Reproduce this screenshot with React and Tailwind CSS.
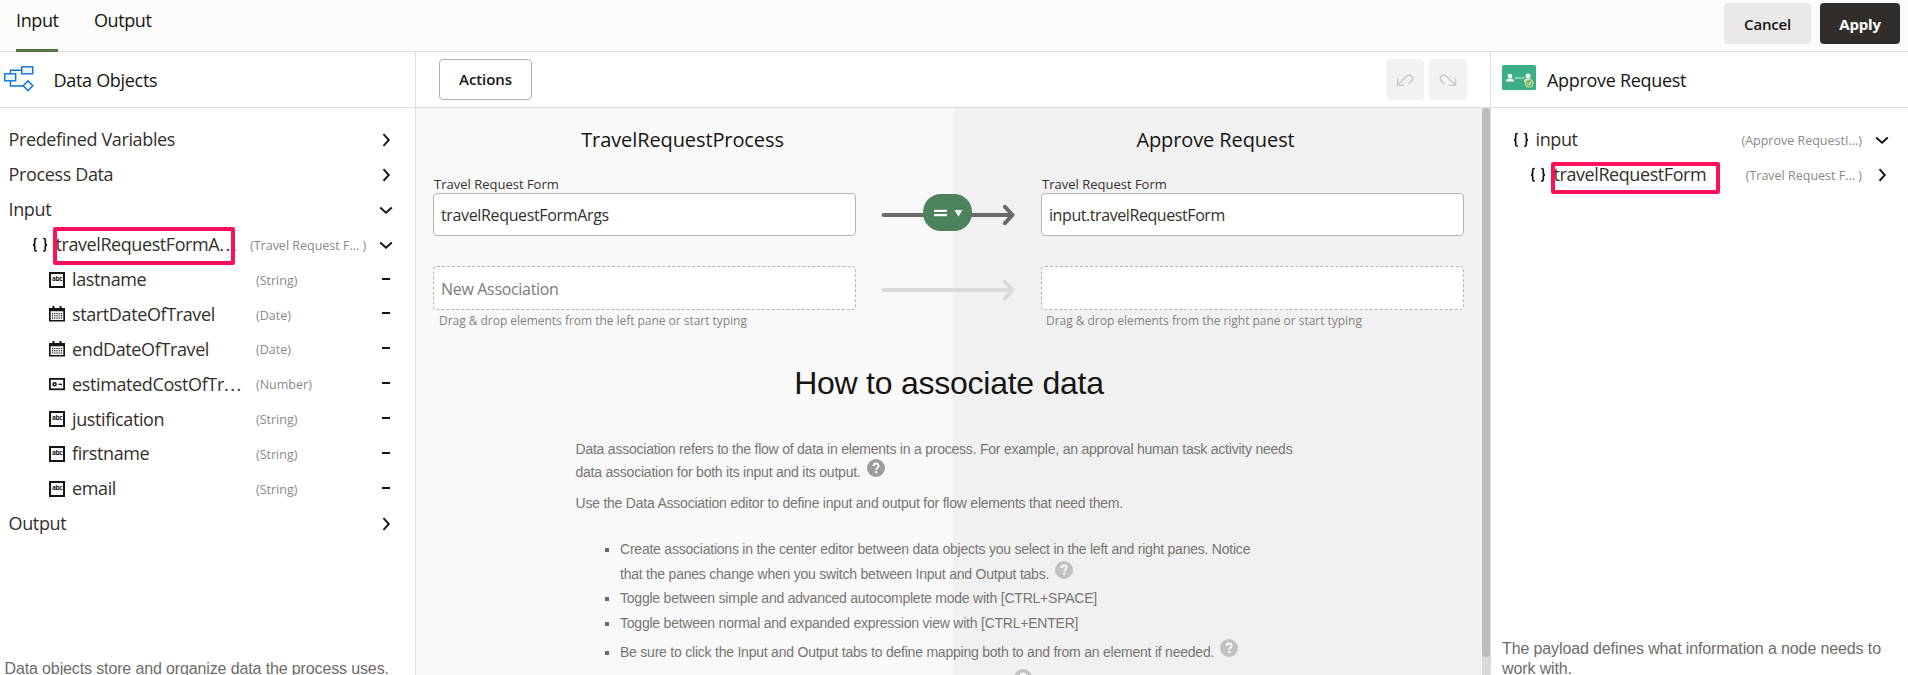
import React from "react";

const chevronPaths = {
  right: "M5.5 2.2 10.8 8l-5.3 5.8",
  down: "M2.2 5.5 8 10.8l5.8-5.3",
};

function Chevron({ dir }) {
  return (
    <svg viewBox="0 0 16 16" className="h-4 w-4 shrink-0" fill="none" stroke="#161513" strokeWidth="1.9">
      <path d={chevronPaths[dir]} />
    </svg>
  );
}

function Marker({ kind }) {
  if (kind === "leaf") {
    return (
      <span className="flex h-4 w-4 shrink-0 items-center justify-center">
        <span className="mb-0.5 h-[2px] w-2 bg-[#161513]" />
      </span>
    );
  }
  return <Chevron dir={kind} />;
}

function Braces() {
  return (
    <svg viewBox="0 0 16 16" className="h-4 w-4 shrink-0" fill="none" stroke="#161513" strokeWidth="1.7">
      <path d="M4.8 1.5H4.2Q2.7 1.5 2.7 3v3Q2.7 7.8 1 7.8q1.7 0 1.7 1.8v3q0 1.6 1.5 1.6h.6" />
      <path d="M11.2 1.5h.6q1.5 0 1.5 1.5v3q0 1.8 1.7 1.8-1.7 0-1.7 1.8v3q0 1.6-1.5 1.6h-.6" />
    </svg>
  );
}

function StringIcon() {
  return (
    <span className="flex h-4 w-4 shrink-0 items-center justify-center border-2 border-[#161513] font-['Open_Sans',sans-serif] text-[6.5px] leading-none font-bold tracking-[-0.4px] text-[#161513]">
      <span className="-mt-px">abc</span>
    </span>
  );
}

function DateIcon() {
  const rows = [7, 9.2, 11.4];
  const cols = [3, 5.2, 7.4, 9.6, 11.8];
  return (
    <svg viewBox="0 0 16 16" className="h-4 w-4 shrink-0" fill="#161513">
      <path d="M3.5 0h2v2h5V0h2v2H16v13.5H0V2h3.5zM1.7 5.3v8.6h12.6V5.3z" fillRule="evenodd" />
      {rows.map((y) => cols.map((x) => <rect key={`${x}-${y}`} x={x} y={y} width="1.2" height="1.2" />))}
    </svg>
  );
}

function NumberIcon() {
  return (
    <svg viewBox="0 0 16 16" className="h-4 w-4 shrink-0" fill="none" stroke="#161513">
      <rect x="0.9" y="2.9" width="14.2" height="10.4" strokeWidth="1.8" />
      <circle cx="5.6" cy="8.3" r="1.5" strokeWidth="1.5" />
      <path d="M9.5 8.3H13" strokeWidth="1.3" />
    </svg>
  );
}

const fieldIcons = { String: StringIcon, Date: DateIcon, Number: NumberIcon };

const fields = [
  ["lastname", "String"],
  ["startDateOfTravel", "Date"],
  ["endDateOfTravel", "Date"],
  ["estimatedCostOfTr...", "Number"],
  ["justification", "String"],
  ["firstname", "String"],
  ["email", "String"],
];

function Label({ text }) {
  if (!text.endsWith("...")) return text;
  return (
    <>
      {text.slice(0, -3)}
      <span className="tracking-[1.6px]">...</span>
    </>
  );
}

function GroupRow({ label, dir }) {
  return (
    <div className="flex h-[34.9px] items-center justify-between pr-[21px] pl-[8.5px]">
      <span className="text-[18px] tracking-[-0.36px]">{label}</span>
      <Chevron dir={dir} />
    </div>
  );
}

function FieldRow({ label, type }) {
  const Icon = fieldIcons[type];
  return (
    <div className="flex h-[34.9px] items-center pr-[21px] pl-[49px]">
      <Icon />
      <span className="ml-[7px] w-[184px] text-[18px] tracking-[-0.38px] whitespace-nowrap">
        <Label text={label} />
      </span>
      <span className="mt-[3px] flex-1 text-[12.5px] text-[#8b8987]">({type})</span>
      <Marker kind="leaf" />
    </div>
  );
}

function Help({ strong }) {
  return (
    <svg viewBox="0 0 18 18" className={`mb-2 ml-[6px] h-[18px] w-[18px] shrink-0 ${strong ? "text-[#9b9d9f]" : "text-[#bfc1c3]"}`}>
      <circle cx="9" cy="9" r="9" fill="currentColor" />
      <path d="M6.6 6.9c0-3.2 5-3.1 5-.2 0 1.9-2.4 1.9-2.4 4" fill="none" stroke="#fff" strokeWidth="1.8" />
      <rect x="8.2" y="12.1" width="2" height="2" fill="#fff" />
    </svg>
  );
}

function Arrow({ color }) {
  return (
    <svg viewBox="0 0 134 22" className="h-[22px] w-[134px]" fill="none" stroke={color} strokeWidth="4" strokeLinecap="round" strokeLinejoin="round">
      <path d="M2.5 11H130M124 2.8l7.5 8.2-7.5 8.2" />
    </svg>
  );
}

function Bullet({ children, className }) {
  return (
    <li className={`flex items-center ${className}`}>
      <span className="mt-px mr-[11px] h-1 w-1 shrink-0 bg-[#6b6a68]" />
      {children}
    </li>
  );
}

export default function App() {
  return (
    <div className="flex h-[675px] w-[1908px] flex-col overflow-hidden bg-white font-['Open_Sans',sans-serif] whitespace-nowrap text-[#34302c]">
      <header className="flex h-[52px] shrink-0 justify-between border-b border-[#dedddc] bg-[#fcfbf9] pl-4">
        <nav className="flex gap-9 text-[18px] tracking-[-0.4px] text-[#161513]">
          <div className="-mb-px flex w-[42px] flex-col justify-between">
            <span className="h-10 leading-10">Input</span>
            <span className="h-[3px] w-full bg-[#567445]" />
          </div>
          <span className="h-10 leading-10">Output</span>
        </nav>
        <div className="flex gap-[9px] pt-[3px] pr-2">
          <button className="flex h-[41px] w-[87px] items-center justify-center rounded bg-[#ebe9e7] pt-0.5 text-[15px] font-semibold tracking-[-0.2px] text-[#161513]">Cancel</button>
          <button className="flex h-[41px] w-20 items-center justify-center rounded bg-[#312d2a] pt-0.5 text-[15px] font-bold tracking-[-0.2px] text-white">Apply</button>
        </div>
      </header>

      <main className="flex min-h-0 flex-1">
        <aside className="flex w-[416px] shrink-0 flex-col border-r border-[#dedddc]">
          <div className="flex h-14 shrink-0 items-center border-b border-[#dedddc] pl-1">
            <svg viewBox="0 0 30 26" className="mb-0.5 h-[26px] w-[30px]" fill="none" stroke="#0a73d1" strokeWidth="1.4">
              <path d="M6.5 7V4.2H17M6.5 15v5H19" />
              <rect x="17.7" y="0.8" width="11" height="7" fill="#eaf4fc" />
              <rect x="0.7" y="7.8" width="11" height="7" fill="#eaf4fc" />
              <path d="M24 14.8l4.8 5-4.8 5-4.8-5z" fill="#eaf4fc" />
            </svg>
            <span className="ml-[19.5px] pt-0.5 text-[18px] tracking-[-0.3px] text-[#161513]">Data Objects</span>
          </div>
          <div className="pt-[14.5px]">
            <GroupRow label="Predefined Variables" dir="right" />
            <GroupRow label="Process Data" dir="right" />
            <GroupRow label="Input" dir="down" />
            <div className="relative flex h-[34.9px] items-center pr-[21px] pl-8">
              <Braces />
              <span className="ml-[7.5px] w-[194.5px] text-[18px] tracking-[-0.42px]">
                <Label text="travelRequestFormA..." />
              </span>
              <span className="mt-[3px] flex-1 text-[12.5px] text-[#8b8987]">(Travel Request F... )</span>
              <Chevron dir="down" />
              <span className="absolute top-0 left-[53px] h-[38px] w-[182px] rounded-xs border-4 border-[#ff0f5a]" />
            </div>
            {fields.map(([label, type]) => (
              <FieldRow key={label} label={label} type={type} />
            ))}
            <GroupRow label="Output" dir="right" />
          </div>
          <p className="mt-auto -mb-[5px] h-[23px] pl-[4.5px] font-['Liberation_Sans',sans-serif] text-[16px] leading-[23px] tracking-[-0.13px] text-[#6e6c6a]">
            Data objects store and organize data the process uses.
          </p>
        </aside>

        <section className="flex w-[1075px] shrink-0 flex-col border-r border-[#dedddc]">
          <div className="flex h-14 shrink-0 items-start justify-between border-b border-[#dedddc] pt-[7px] pr-[23px] pl-[23px]">
            <button className="flex h-[41px] w-[93px] items-center justify-center rounded border border-[#b3b1af] text-[15px] font-semibold tracking-[-0.1px] text-[#161513]">Actions</button>
            <div className="flex gap-[5px]">
              <button className="flex h-[41px] w-[38px] items-center justify-center rounded bg-[#f2f2f2]">
                <svg viewBox="0 0 18 14" className="h-3.5 w-[18px]" fill="none" stroke="#cbcac9" strokeWidth="1.5">
                  <path d="M1.5 5.5v6.8h6.8M1.8 12 10 3.4c3.8-3.9 9 1.4 5.2 5.2l-2.4 2.3" />
                </svg>
              </button>
              <button className="flex h-[41px] w-[38px] items-center justify-center rounded bg-[#f2f2f2]">
                <svg viewBox="0 0 18 14" className="h-3.5 w-[18px]" fill="none" stroke="#cbcac9" strokeWidth="1.5">
                  <path d="M16.5 5.5v6.8H9.7M16.2 12 8 3.4C4.2-.5-1 4.8 2.8 8.6l2.4 2.3" />
                </svg>
              </button>
            </div>
          </div>

          <div className="flex min-h-0 flex-1 bg-[linear-gradient(90deg,#f9f9f9_537px,#f1f1f1_537px)]">
            <div className="w-[1066px] shrink-0">
              <div className="grid h-16 grid-cols-2 items-center text-center text-[20px] tracking-[-0.1px] text-[#161513]">
                <h2>TravelRequestProcess</h2>
                <h2>Approve Request</h2>
              </div>

              <div className="grid grid-cols-[423px_185px_423px] pt-0.5 pl-[17px]">
                <span className="h-[19px] pl-px text-[13px] leading-[21px]">Travel Request Form</span>
                <span />
                <span className="h-[19px] pl-px text-[13px] leading-[21px]">Travel Request Form</span>

                <div className="flex h-[43px] items-center rounded border border-[#b5b4b3] bg-white pl-[7px] text-[16px] tracking-[-0.35px]">travelRequestFormArgs</div>
                <div className="relative flex items-center pl-[25px]">
                  <Arrow color="#6c6b6a" />
                  <span className="absolute top-px left-[67px] flex h-[37px] w-[49px] items-center justify-center gap-2 rounded-[18px] bg-[#4c825c]">
                    <svg viewBox="0 0 30 8" className="ml-px h-2 w-[30px]" fill="#fff">
                      <rect x="1" y="0.8" width="13" height="2.2" />
                      <rect x="1" y="5" width="13" height="2.2" />
                      <path d="M21.5 1h8l-4 6.6z" />
                    </svg>
                  </span>
                </div>
                <div className="flex h-[43px] items-center rounded border border-[#b5b4b3] bg-white pl-[7px] text-[16px] tracking-[-0.42px]">input.travelRequestForm</div>
              </div>

              <div className="mt-[30px] grid grid-cols-[423px_185px_423px] pl-[17px]">
                <div className="flex h-11 items-center rounded border border-dashed border-[#b5b4b3] bg-white pt-0.5 pl-[7px] text-[16px] tracking-[-0.32px] text-[#7d7b79]">New Association</div>
                <div className="flex items-center pt-[3px] pl-[25px]">
                  <Arrow color="#dadada" />
                </div>
                <div className="h-11 rounded border border-dashed border-[#b5b4b3] bg-white" />
                <span className="h-5 pl-1.5 text-[12px] leading-[21px] tracking-[-0.03px] text-[#858381]">Drag &amp; drop elements from the left pane or start typing</span>
                <span />
                <span className="h-5 pl-[5px] text-[12px] leading-[21px] tracking-[-0.03px] text-[#858381]">Drag &amp; drop elements from the right pane or start typing</span>
              </div>

              <div className="font-['Liberation_Sans',sans-serif] text-[14px] tracking-[-0.225px] text-[#777573]">
                <h1 className="mt-[33px] h-[39px] text-center text-[32px] leading-10 tracking-[-0.25px] text-[#161513]">How to associate data</h1>
                <div className="mt-[35.5px] pl-[159.5px]">
                  <p className="h-[23px] leading-[23px]">Data association refers to the flow of data in elements in a process. For example, an approval human task activity needs</p>
                  <p className="flex h-[23px] items-center">
                    data association for both its input and its output. <Help strong />
                  </p>
                  <p className="mt-2 h-[23px] leading-[23px]">Use the Data Association editor to define input and output for flow elements that need them.</p>
                  <ul className="mt-[22px] pl-[29.5px]">
                    <Bullet className="h-[25px]">Create associations in the center editor between data objects you select in the left and right panes. Notice</Bullet>
                    <li className="flex h-[25px] items-center pl-[15px]">
                      that the panes change when you switch between Input and Output tabs. <Help />
                    </li>
                    <Bullet className="h-6">Toggle between simple and advanced autocomplete mode with [CTRL+SPACE]</Bullet>
                    <Bullet className="h-[25px]">Toggle between normal and expanded expression view with [CTRL+ENTER]</Bullet>
                    <Bullet className="h-[33px]">
                      Be sure to click the Input and Output tabs to define mapping both to and from an element if needed. <Help />
                    </Bullet>
                    <li className="flex h-[18px] pl-[403px]">
                      <Help />
                    </li>
                  </ul>
                </div>
              </div>
            </div>
            <div className="w-2 shrink-0 bg-[#d9d9d7]">
              <div className="h-[549px] rounded-full bg-[#bbbbb9]" />
            </div>
          </div>
        </section>

        <aside className="flex flex-1 flex-col">
          <div className="flex h-14 shrink-0 items-center border-b border-[#dedddc] pl-[11px]">
            <svg viewBox="0 0 34 25" className="mb-1 h-[25px] w-[34px]">
              <rect width="34" height="25" rx="1.5" fill="#3caf85" />
              <g fill="#fff">
                <circle cx="8" cy="11" r="2.3" />
                <path d="M4 16.5q0-3 4-3t4 3z" />
                <circle cx="26" cy="11" r="2.5" />
                <path d="M22 16.5q0-3 4-3t4 3z" />
                <path d="M13 12.4h2.5v1.2H13zM16.5 12.4H19v1.2h-2.5zM20 12.4h2v1.2h-2z" />
              </g>
              <circle cx="27.2" cy="18.3" r="4" fill="#7cb95c" stroke="#dcecc4" strokeWidth="0.8" />
              <path d="M25.2 18.4l1.5 1.5 2.6-3" fill="none" stroke="#fff" strokeWidth="1" />
            </svg>
            <span className="ml-[11px] pt-0.5 text-[18px] tracking-[-0.3px] text-[#161513]">Approve Request</span>
          </div>
          <div className="pt-[14.5px]">
            <div className="flex h-[34.9px] items-center pr-[18px] pl-[22px]">
              <Braces />
              <span className="ml-[6.5px] flex-1 text-[18px] tracking-[-0.4px]">input</span>
              <span className="mt-[3px] mr-3 text-[12.5px] text-[#8b8987]">(Approve RequestI...)</span>
              <Chevron dir="down" />
            </div>
            <div className="relative flex h-[34.9px] items-center pr-[18px] pl-[39px]">
              <Braces />
              <span className="ml-[7.5px] flex-1 text-[18px] tracking-[-0.42px]">travelRequestForm</span>
              <span className="mt-[3px] mr-3 text-[12.5px] text-[#8b8987]">(Travel Request F... )</span>
              <Chevron dir="right" />
              <span className="absolute top-[5px] left-[60px] h-8 w-[169px] rounded-xs border-4 border-[#ff0f5a]" />
            </div>
          </div>
          <p className="mt-auto -mb-1 pl-[11px] font-['Liberation_Sans',sans-serif] text-[16px] leading-5 tracking-[-0.12px] text-[#6e6c6a]">
            The payload defines what information a node needs to
            <br />
            work with.
          </p>
        </aside>
      </main>
    </div>
  );
}
